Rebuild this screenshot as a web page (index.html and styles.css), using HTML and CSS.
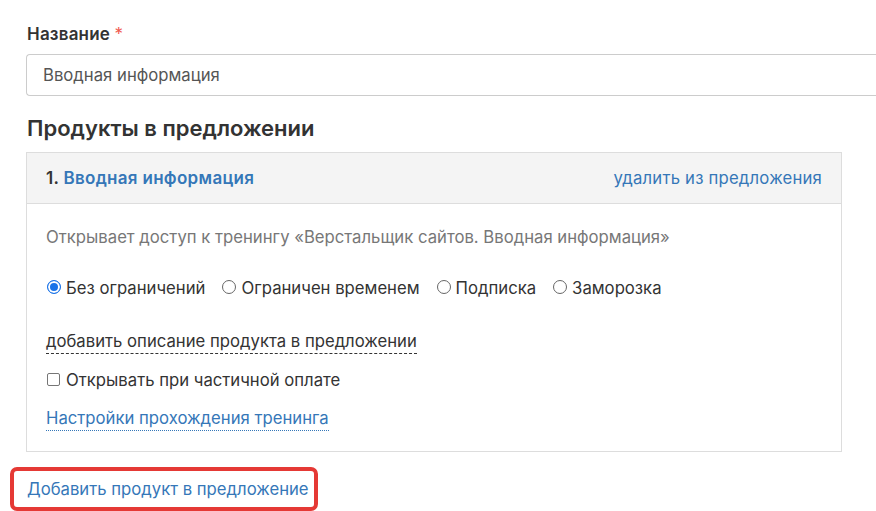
FILE: index.html
```html
<!DOCTYPE html>
<html lang="ru">
<head>
<meta charset="utf-8">
<link rel="stylesheet" href="styles.css">
</head>
<body>
<div class="page">
  <div class="field">
    <label class="label">Название <span class="req">*</span></label>
    <div class="input">Вводная информация</div>
  </div>
  <h2 class="title">Продукты в предложении</h2>
  <div class="panel">
    <div class="panel-head">
      <div class="ph-left">1. <a class="prod-link">Вводная информация</a></div>
      <a class="remove">удалить из предложения</a>
    </div>
    <div class="panel-body">
      <p class="desc">Открывает доступ к тренингу «Верстальщик сайтов. Вводная информация»</p>
      <div class="radios">
        <label class="opt"><span class="radio checked"></span>Без ограничений</label>
        <label class="opt"><span class="radio"></span>Ограничен временем</label>
        <label class="opt"><span class="radio"></span>Подписка</label>
        <label class="opt"><span class="radio"></span>Заморозка</label>
      </div>
      <div class="row"><a class="dashed">добавить описание продукта в предложении</a></div>
      <label class="opt check-row"><span class="checkbox"></span>Открывать при частичной оплате</label>
      <div class="row"><a class="dotted">Настройки прохождения тренинга</a></div>
    </div>
  </div>
  <div class="add-wrap"><a class="add">Добавить продукт в предложение</a></div>
</div>
</body>
</html>
```
FILE: styles.css
```css
* { box-sizing: border-box; }
html, body { margin: 0; padding: 0; background: #fff; }
body {
  font-family: Inter, "Noto Sans", sans-serif;
  font-size: 16.7px;
  color: #333;
  overflow: hidden;
  width: 876px;
  height: 511px;
}
.page { padding: 22px 0 0 26px; }
.field { display: flex; flex-direction: column; }
.label { font-weight: 600; font-size: 17px; color: #333; padding-left: 1px; height: 24px; line-height: 24px; margin-bottom: 8px; letter-spacing: 0.2px; }
.req { color: #f05a4f; font-weight: 400; }
.input {
  height: 42px;
  width: 850px;
  border: 1px solid #ccc;
  border-right: none;
  border-radius: 4px 0 0 4px;
  padding: 0 16px;
  line-height: 40px;
  color: #555;
}
.title {
  margin: 20px 0 12px 1px;
  font-size: 22px;
  font-weight: 600;
  color: #333;
  line-height: 24px;
}
.panel {
  width: 816px;
  border: 1px solid #ddd;
}
.panel-head {
  height: 51px;
  background: #f4f4f4;
  border-bottom: 1px solid #ddd;
  display: flex;
  align-items: center;
  justify-content: space-between;
  padding: 0 19px 0 19px;
}
.ph-left { font-weight: 600; color: #333; font-size: 17px; letter-spacing: 0.3px; }
.prod-link { color: #3577b8; }
.remove { color: #3577b8; letter-spacing: 0.2px; }
.panel-body { padding: 21px 19px 21px 19px; }
.desc { margin: 0; color: #777; line-height: 24px; }
.radios { display: flex; gap: 16px; margin-top: 27px; line-height: 24px; }
.opt { display: flex; align-items: center; color: #333; }
.radio {
  width: 14px; height: 14px; border-radius: 50%;
  border: 1px solid #666;
  margin-right: 5px;
  margin-left: 1px;
  display: inline-block;
  position: relative;
  top: -1px;
}
.radio.checked { border: 1.5px solid #1a73e8; box-shadow: inset 0 0 0 2px #fff; background: #1a73e8; }
.row { line-height: 24px; }
.radios + .row { margin-top: 29px; }
.dashed { color: #333; border-bottom: 1px dashed #333; padding-bottom: 2px; }
.check-row { margin-top: 15px; line-height: 24px; }
.checkbox {
  width: 13px; height: 13px; border: 1px solid #767676; border-radius: 2px;
  margin: 0 6px 0 1px; position: relative; top: -1px;
}
.check-row + .row { margin-top: 14px; }
.dotted { color: #3577b8; border-bottom: 1px dotted #3577b8; padding-bottom: 2px; }
.add-wrap {
  margin: 15px 0 0 -16px;
  width: 308px;
  height: 44px;
  border: 4px solid #e53935;
  border-radius: 7px;
  display: flex;
  align-items: center;
  padding-left: 13px;
}
.add { color: #3577b8; }
```
